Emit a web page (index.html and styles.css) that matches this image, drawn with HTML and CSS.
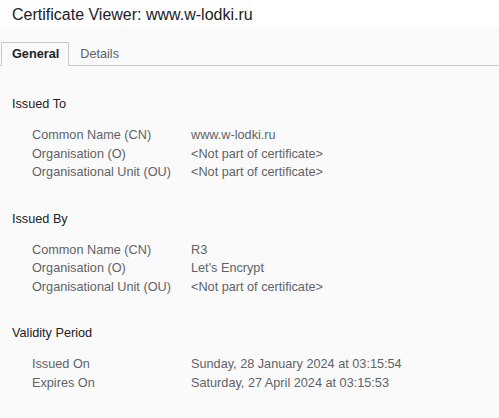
FILE: index.html
```html
<!DOCTYPE html>
<html>
<head>
<meta charset="utf-8">
<link rel="stylesheet" href="styles.css">
</head>
<body>
<div class="title">Certificate Viewer: www.w-lodki.ru</div>
<div class="main">
  <div class="tabs">
    <div class="tab active">General</div>
    <div class="tab">Details</div>
  </div>
  <div class="content">
    <section class="sec">
      <h2 class="sec-title">Issued To</h2>
      <div class="grid">
        <div class="lbl">Common Name (CN)</div><div class="val">www.w-lodki.ru</div>
        <div class="lbl">Organisation (O)</div><div class="val">&lt;Not part of certificate&gt;</div>
        <div class="lbl">Organisational Unit (OU)</div><div class="val">&lt;Not part of certificate&gt;</div>
      </div>
    </section>
    <section class="sec">
      <h2 class="sec-title">Issued By</h2>
      <div class="grid">
        <div class="lbl">Common Name (CN)</div><div class="val">R3</div>
        <div class="lbl">Organisation (O)</div><div class="val">Let's Encrypt</div>
        <div class="lbl">Organisational Unit (OU)</div><div class="val">&lt;Not part of certificate&gt;</div>
      </div>
    </section>
    <section class="sec">
      <h2 class="sec-title">Validity Period</h2>
      <div class="grid">
        <div class="lbl">Issued On</div><div class="val">Sunday, 28 January 2024 at 03:15:54</div>
        <div class="lbl">Expires On</div><div class="val">Saturday, 27 April 2024 at 03:15:53</div>
      </div>
    </section>
  </div>
</div>
</body>
</html>
```
FILE: styles.css
```css
html, body {
  margin: 0;
  padding: 0;
  height: 100%;
  overflow: hidden;
}
body {
  font-family: "Liberation Sans", Arial, sans-serif;
  background: #fafafa;
  color: #202124;
}
.title {
  background: #ffffff;
  height: 27px;
  padding-left: 12px;
  font-size: 16px;
  line-height: 29px;
  color: #202124;
}
.main {
  padding-top: 15px;
}
.tabs {
  display: flex;
  border-bottom: 1px solid #c8c8c8;
  padding-left: 1px;
  height: 23px;
  margin-right: 1px;
}
.tab {
  font-size: 12.7px;
  line-height: 22px;
  padding: 0 10px;
  color: #5f6368;
  border: 1px solid transparent;
  border-bottom: none;
}
.tab.active {
  color: #202124;
  font-weight: bold;
  border-color: #c8c8c8;
  background: #fafafa;
  height: 23px;
  margin-bottom: -1px;
  padding: 0 9px 0 10px;
}
.content {
  padding: 30px 12px 0 12px;
}
.sec {
  margin-bottom: 29px;
}
.sec-title {
  margin: 0;
  font-size: 12.7px;
  font-weight: normal;
  line-height: 16px;
  color: #202124;
}
.grid {
  display: grid;
  grid-template-columns: 159px auto;
  padding-left: 20px;
  margin-top: 14px;
  font-size: 12.7px;
  line-height: 18.5px;
  color: #5f6368;
}
```
